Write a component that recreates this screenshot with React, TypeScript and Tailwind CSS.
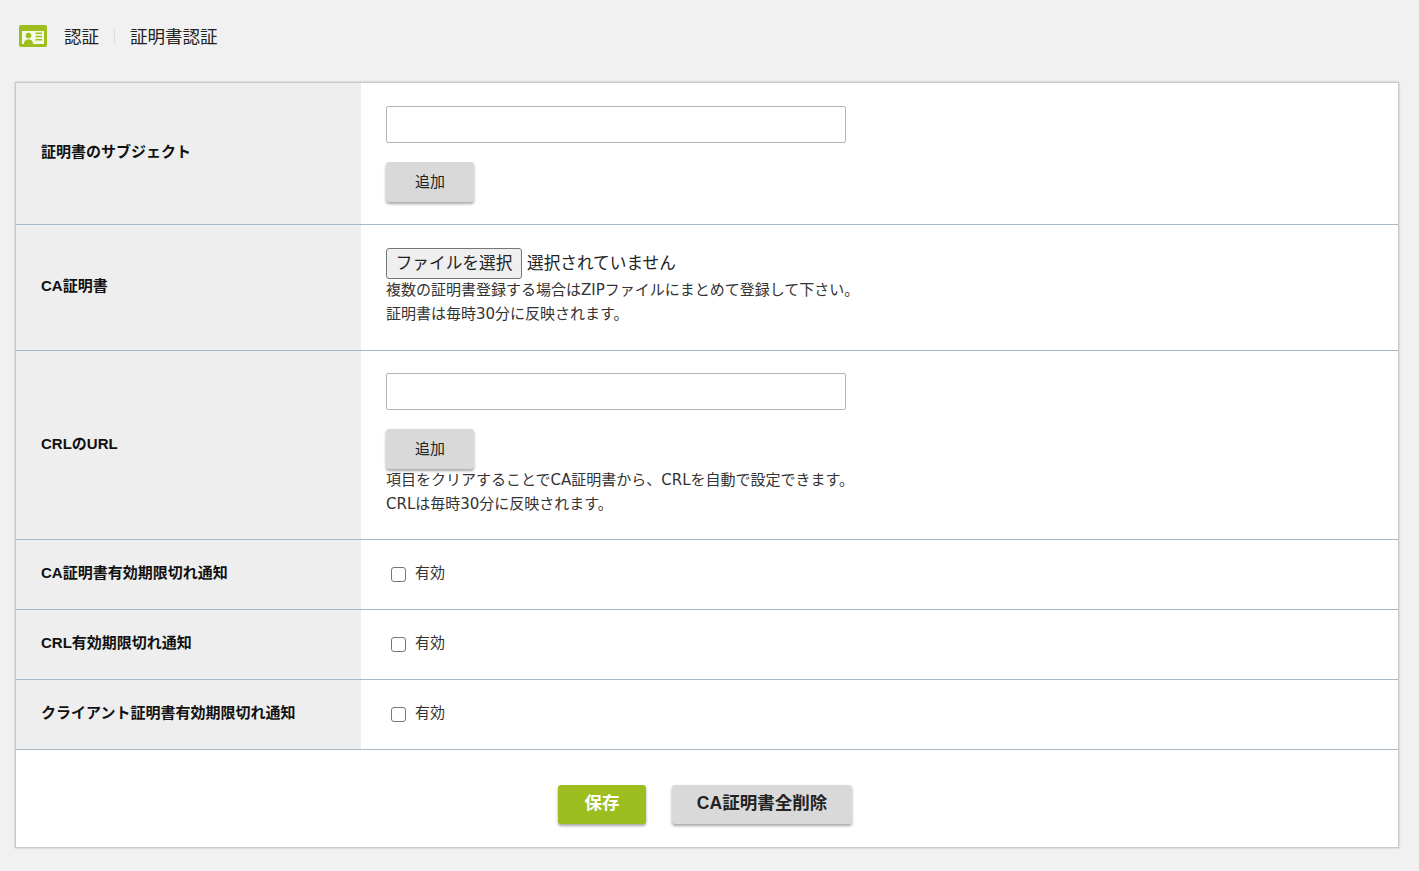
import React from 'react';

const font = "font-['DejaVu_Sans','Noto_Sans_CJK_JP',sans-serif]";
const boldFont = "font-['Liberation_Sans','Noto_Sans_CJK_JP',sans-serif] font-bold";

function Row({ label, className, children }: { label: string; className: string; children: React.ReactNode }) {
  return (
    <div className={`flex border-b border-[#a9b8c3] ${className}`}>
      <div className={`w-[345px] shrink-0 bg-[#eeeeee] flex items-center pl-[25px] pb-[2px] text-[15px] text-[#111] ${boldFont}`}>{label}</div>
      <div className="flex-1 pl-[25px]">{children}</div>
    </div>
  );
}

function AddButton() {
  return (
    <button className="block w-[88px] h-[40px] rounded-[3px] bg-[#d9d9d9] text-[15px] text-[#222] shadow-[0_2px_3px_rgba(0,0,0,0.35)]">追加</button>
  );
}

function TextBox() {
  return <input type="text" className="block w-[460px] h-[37px] bg-white border border-[#b5b5b5] rounded-[2px]" />;
}

function Enable() {
  return (
    <div className="h-full flex items-center">
      <span className="w-[15px] h-[15px] ml-[5px] bg-white border border-[#767676] rounded-[3px]" />
      <span className="ml-[9px] mb-[3px] text-[15px] text-[#333]">有効</span>
    </div>
  );
}

export default function App() {
  return (
    <div className={`min-h-[871px] bg-[#f1f1f1] px-[15px] pt-[18px] ${font}`}>
      {/* Header */}
      <div className="h-[37px] flex items-center pl-[4px] text-[17.5px] text-[#222]">
        <svg width="28" height="22" viewBox="0 0 28 22" className="shrink-0 mb-[1px]">
          <rect width="28" height="22" rx="2" fill="#9dbe1e" />
          <rect x="3" y="6" width="22" height="13" fill="#f4f8e4" />
          <circle cx="9.500" cy="10.500" r="2.800" fill="#9dbe1e" />
          <path d="M5 19c0-3.500 2-4.600 4.500-4.600S14 15.500 14 19z" fill="#9dbe1e" />
          <path d="M16.500 7.500h6.500v1.400h-6.500zM16.500 10.800h6.500v1.400h-6.500zM16.500 14h6.500v1.400h-6.500z" fill="#9dbe1e" />
        </svg>
        <span className="ml-[17px] mt-[1px]">認証</span>
        <span className="w-px h-[15px] bg-[#dddddd] mx-[15px]" />
        <span className="mt-[1px]">証明書認証</span>
      </div>

      {/* Form card */}
      <div className="mt-[27px] w-[1384px] border border-[#c9c9c9] bg-white shadow-[0_0_2px_rgba(0,0,0,0.25)]">
        <Row label="証明書のサブジェクト" className="h-[142px]">
          <div className="pt-[23px]">
            <TextBox />
            <div className="mt-[19px]"><AddButton /></div>
          </div>
        </Row>

        <Row label="CA証明書" className="h-[126px]">
          <div className="pt-[23px] text-[15px] leading-[24px] text-[#333]">
            <div className="flex items-center h-[31px] font-['Liberation_Sans','Noto_Sans_CJK_JP',sans-serif] text-[16.67px] text-[#222]">
              <span className="h-[31px] w-[136px] flex items-center justify-center bg-[#efefef] border border-[#767676] rounded-[3px]">ファイルを選択</span>
              <span className="ml-[5px]">選択されていません</span>
            </div>
            <p className="mt-[-1px]">複数の証明書登録する場合はZIPファイルにまとめて登録して下さい。</p>
            <p>証明書は毎時30分に反映されます。</p>
          </div>
        </Row>

        <Row label="CRLのURL" className="h-[189px]">
          <div className="pt-[22px] text-[15px] leading-[24px] text-[#333]">
            <TextBox />
            <div className="mt-[19px]"><AddButton /></div>
            <p className="mt-[-1px]">項目をクリアすることでCA証明書から、CRLを自動で設定できます。</p>
            <p>CRLは毎時30分に反映されます。</p>
          </div>
        </Row>

        <Row label="CA証明書有効期限切れ通知" className="h-[70px]"><Enable /></Row>
        <Row label="CRL有効期限切れ通知" className="h-[70px]"><Enable /></Row>
        <Row label="クライアント証明書有効期限切れ通知" className="h-[70px]"><Enable /></Row>

        {/* Actions */}
        <div className="h-[97px] flex justify-center items-start pt-[35px] gap-[26px] pr-[4px]">
          <button className={`w-[88px] h-[39px] pb-[3px] rounded-[3px] bg-[#9dbe1e] text-white text-[17.5px] shadow-[0_2px_3px_rgba(0,0,0,0.35)] ${boldFont}`}>保存</button>
          <button className={`w-[180px] h-[39px] pb-[3px] rounded-[3px] bg-[#d9d9d9] text-[#222] text-[17.5px] shadow-[0_2px_3px_rgba(0,0,0,0.35)] ${boldFont}`}>CA証明書全削除</button>
        </div>
      </div>
    </div>
  );
}
